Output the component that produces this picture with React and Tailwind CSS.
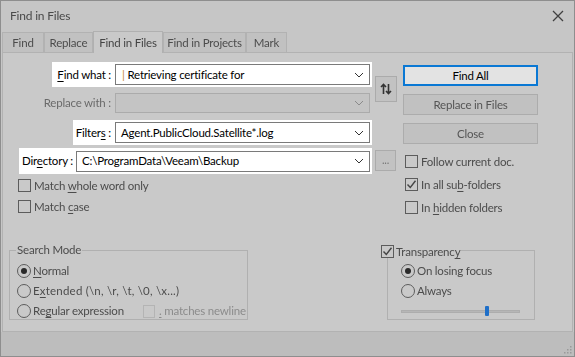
import React from "react";

const FONT = "font-['Lato',sans-serif]";

function Chevron({ color = "#333" }) {
  return (
    <svg width="10" height="6" viewBox="0 0 10 6" className="shrink-0">
      <path d="M1 1 L5 5 L9 1" fill="none" stroke={color} strokeWidth="1" />
    </svg>
  );
}

function Check() {
  return (
    <svg width="11" height="11" viewBox="0 0 11 11">
      <path d="M1.5 5.5 L4.3 8.5 L9.5 1.8" fill="none" stroke="#444" strokeWidth="1.4" />
    </svg>
  );
}

function Box({ checked, dim }) {
  return (
    <span
      className={
        dim
          ? "w-[12px] h-[13px] border border-[#b4b4b4] flex items-center justify-center shrink-0"
          : "w-[13px] h-[13px] border border-[#5c5c5c] flex items-center justify-center shrink-0"
      }
    >
      {checked ? <Check /> : null}
    </span>
  );
}

function Radio({ on }) {
  return (
    <span className="w-[14px] h-[14px] rounded-full border border-[#5c5c5c] flex items-center justify-center shrink-0">
      {on ? <span className="w-[6px] h-[6px] rounded-full bg-[#2a2a2a]" /> : null}
    </span>
  );
}

function U({ children }) {
  return <span className="underline underline-offset-2">{children}</span>;
}

function Tab({ w, children, active }) {
  return active ? (
    <div
      className={`${w} h-[22px] border border-b-0 border-[#b0b0b0] bg-[#c9c9c9] flex items-center justify-center text-[#444] whitespace-nowrap -mb-[1px] relative`}
    >
      {children}
    </div>
  ) : (
    <div
      className={`${w} h-[20px] border border-b-0 border-[#b2b2b2] bg-[#c1c1c1] flex items-center justify-center text-[#4c4c4c] whitespace-nowrap`}
    >
      {children}
    </div>
  );
}

export default function App() {
  return (
    <div
      className={`w-[575px] h-[357px] bg-[#c6c6c6] border border-[#8e8e8e] flex flex-col overflow-hidden text-[11.5px] tracking-[-0.2px] ${FONT}`}
    >
      {/* title bar */}
      <div className="h-[29px] shrink-0 flex items-center justify-between pl-[9px] pr-[10px] blur-[0.6px]">
        <span className="text-[12px] text-[#4a4a4a]">Find in Files</span>
        <svg width="12" height="12" viewBox="0 0 12 12">
          <path d="M1 1 L11 11 M11 1 L1 11" stroke="#404040" strokeWidth="1.3" />
        </svg>
      </div>

      {/* tabs */}
      <div className="h-[22px] shrink-0 flex items-end pl-[1px] blur-[0.6px] relative z-10">
        <Tab w="w-[42px]">Find</Tab>
        <Tab w="w-[49px]">Replace</Tab>
        <Tab w="w-[70px]" active>
          Find in Files
        </Tab>
        <Tab w="w-[83px]">Find in Projects</Tab>
        <Tab w="w-[41px]">Mark</Tab>
      </div>

      {/* panel */}
      <div className="h-[280px] shrink-0 mx-[1px] border border-[#b2b2b2] bg-[#c9c9c9] flex flex-col">
        <div className="h-[162px] flex">
          {/* left column */}
          <div className="w-[369px] flex flex-col items-end">
            {/* Find what */}
            <div className="mt-[9px] h-[25px] w-[320px] bg-white flex items-center pl-[4px] pr-[2px]">
              <span className="flex-1 min-w-0 flex justify-end pr-[4px] text-black whitespace-nowrap">
                <span>
                  <U>F</U>ind what :
                </span>
              </span>
              <div className="w-[255px] shrink-0 h-[21px] border border-[#7a7a7a] flex items-center justify-between pl-[6px] pr-[5px]">
                <span className="text-black whitespace-nowrap">
                  <span className="text-[#c8893c]">|</span> Retrieving certificate for
                </span>
                <Chevron />
              </div>
            </div>
            {/* Replace with */}
            <div className="mt-[6px] h-[20px] w-[320px] flex items-center pr-[2px] blur-[0.6px]">
              <span className="flex-1 min-w-0 flex justify-end pr-[4px] text-[#6a6a6a] whitespace-nowrap">
                <span>Replace with :</span>
              </span>
              <div className="w-[255px] shrink-0 h-[20px] border border-[#ababab] bg-[#c4c4c4] flex items-center justify-end pr-[5px]">
                <Chevron color="#8a8a8a" />
              </div>
            </div>
            {/* Filters */}
            <div className="mt-[7px] h-[25px] w-[299px] bg-white flex items-center pl-[3px] pr-[2px]">
              <span className="flex-1 min-w-0 flex justify-end pr-[4px] text-black whitespace-nowrap">
                <span>
                  Filter<U>s</U> :
                </span>
              </span>
              <div className="w-[255px] shrink-0 h-[21px] border border-[#7a7a7a] flex items-center justify-between pl-[5px] pr-[5px]">
                <span className="text-black whitespace-nowrap">Agent.PublicCloud.Satellite*.log</span>
                <Chevron />
              </div>
            </div>
            {/* Directory */}
            <div className="mt-[3px] h-[26px] w-[353px] bg-white flex items-center pl-[3px] pr-[2px]">
              <span className="flex-1 min-w-0 flex justify-end pr-[3px] text-black whitespace-nowrap">
                <span>
                  Dir<U>e</U>ctory :
                </span>
              </span>
              <div className="w-[294px] shrink-0 h-[21px] border border-[#7a7a7a] flex items-center justify-between pl-[5px] pr-[5px]">
                <span className="text-black whitespace-nowrap">C:\ProgramData\Veeam\Backup</span>
                <Chevron />
              </div>
            </div>
            {/* checkboxes */}
            <div className="self-start ml-[15px] mt-[5px] flex flex-col gap-[8px] blur-[0.6px]">
              <div className="flex items-center gap-[3px] h-[13px]">
                <Box />
                <span className="text-[#4c4c4c] whitespace-nowrap">
                  Match <U>w</U>hole word only
                </span>
              </div>
              <div className="flex items-center gap-[3px] h-[13px]">
                <Box />
                <span className="text-[#4c4c4c] whitespace-nowrap">
                  Match <U>c</U>ase
                </span>
              </div>
            </div>
          </div>

          {/* middle column */}
          <div className="w-[25px] flex flex-col blur-[0.6px]">
            <div className="mt-[23px] ml-[3px] w-[22px] h-[26px] border border-[#ababab] bg-[#c2c2c2] flex items-center justify-center">
              <svg width="12" height="12" viewBox="0 0 12 12">
                <path d="M3.5 11 V1.5 M1 4 L3.5 1.5 L6 4" fill="none" stroke="#333" strokeWidth="1.6" />
                <path d="M8.5 1 V10.5 M6 8 L8.5 10.5 L11 8" fill="none" stroke="#333" strokeWidth="1.6" />
              </svg>
            </div>
            <div className="mt-[48px] ml-[3px] w-[21px] h-[21px] border border-[#ababab] bg-[#c2c2c2] flex items-end justify-center text-[11px] text-[#777] leading-none pb-[5px]">
              ...
            </div>
          </div>

          {/* right column */}
          <div className="ml-[6px] w-[135px] flex flex-col">
            <div className="mt-[12px] h-[21px] border-2 border-[#0a78d4] bg-[#e3e3e3] flex items-center justify-center text-black">
              Find All
            </div>
            <div className="mt-[8px] h-[21px] border border-[#acacac] bg-[#c1c1c1] flex items-center justify-center text-[#555] blur-[0.6px]">
              Replace in Files
            </div>
            <div className="mt-[8px] h-[21px] border border-[#acacac] bg-[#c1c1c1] flex items-center justify-center text-[#555] blur-[0.6px]">
              Close
            </div>
            <div className="mt-[11px] ml-[2px] flex flex-col gap-[10px] blur-[0.6px]">
              <div className="flex items-center gap-[3px] h-[13px]">
                <Box />
                <span className="text-[#4c4c4c] whitespace-nowrap">Follow current doc.</span>
              </div>
              <div className="flex items-center gap-[3px] h-[13px]">
                <Box checked />
                <span className="text-[#4c4c4c] whitespace-nowrap">
                  In all su<U>b</U>-folders
                </span>
              </div>
              <div className="flex items-center gap-[3px] h-[13px]">
                <Box />
                <span className="text-[#4c4c4c] whitespace-nowrap">
                  In <U>h</U>idden folders
                </span>
              </div>
            </div>
          </div>
        </div>

        {/* bottom groups */}
        <div className="mt-[35px] flex blur-[0.6px]">
          {/* Search Mode */}
          <div className="ml-[6px] w-[239px] h-[70px] border border-[#b0b0b0] relative flex flex-col pl-[7px] pt-[13px] gap-[6px]">
            <span className="absolute left-[6px] -top-[9px] px-[1px] bg-[#c9c9c9] text-[#4c4c4c] leading-[16px] whitespace-nowrap">
              Search Mode
            </span>
            <div className="flex items-center gap-[2px] h-[14px]">
              <Radio on />
              <span className="text-[#4c4c4c]">
                <U>N</U>ormal
              </span>
            </div>
            <div className="flex items-center gap-[2px] h-[14px]">
              <Radio />
              <span className="text-[#4c4c4c] whitespace-nowrap tracking-[0.2px]">
                E<U>x</U>tended (\n, \r, \t, \0, \x...)
              </span>
            </div>
            <div className="flex items-center gap-[2px] h-[14px]">
              <Radio />
              <span className="text-[#4c4c4c] whitespace-nowrap w-[108px]">
                Re<U>g</U>ular expression
              </span>
              <Box dim />
              <span className="ml-[2px] text-[#8c8c8c] whitespace-nowrap">
                <U>.</U> matches newline
              </span>
            </div>
          </div>

          {/* Transparency */}
          <div className="ml-[139px] w-[148px] h-[70px] border border-[#b0b0b0] relative flex flex-col pl-[13px] pt-[13px] gap-[6px]">
            <div className="absolute -left-[7px] -top-[6px] flex items-center gap-[2px] bg-[#c9c9c9] pr-[1px]">
              <Box checked />
              <span className="text-[#4c4c4c] leading-[13px] whitespace-nowrap">
                Transparenc<U>y</U>
              </span>
            </div>
            <div className="flex items-center gap-[2px] h-[14px]">
              <Radio on />
              <span className="text-[#4c4c4c] whitespace-nowrap">On losing focus</span>
            </div>
            <div className="flex items-center gap-[2px] h-[14px]">
              <Radio />
              <span className="text-[#4c4c4c]">Always</span>
            </div>
            <div className="mt-[2px] w-[119px] h-[10px] flex items-center relative">
              <div className="w-full h-[3px] bg-[#b6b6b6] border border-[#adadad]" />
              <div className="absolute left-[84px] top-0 w-[4px] h-[10px] bg-[#1f6fc8] rounded-[1px]" />
            </div>
          </div>
        </div>
      </div>

      {/* bottom strip */}
      <div className="flex-1 bg-[#bdbdbd] flex items-end justify-end pr-[2px] pb-[2px] blur-[0.6px]">
        <svg width="8" height="8" viewBox="0 0 8 8">
          <rect x="6" y="0" width="1.5" height="1.5" fill="#999" />
          <rect x="3" y="3" width="1.5" height="1.5" fill="#999" />
          <rect x="6" y="3" width="1.5" height="1.5" fill="#999" />
          <rect x="0" y="6" width="1.5" height="1.5" fill="#999" />
          <rect x="3" y="6" width="1.5" height="1.5" fill="#999" />
          <rect x="6" y="6" width="1.5" height="1.5" fill="#999" />
        </svg>
      </div>
    </div>
  );
}
